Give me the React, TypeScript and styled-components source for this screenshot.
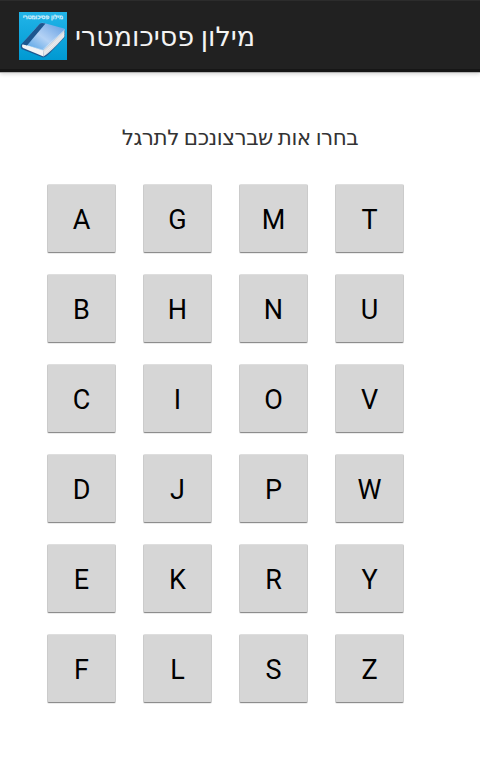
import React from 'react';
import styled, { createGlobalStyle } from 'styled-components';

const GlobalStyle = createGlobalStyle`
  * { box-sizing: border-box; }
  body {
    margin: 0;
    background: #fff;
    font-family: Roboto, 'DejaVu Sans', sans-serif;
  }
`;

const Screen = styled.div`
  width: 480px;
  height: 762px;
  overflow: hidden;
  background: #fff;
`;

const ActionBar = styled.header`
  display: flex;
  align-items: center;
  height: 72px;
  padding-left: 19px;
  gap: 8px;
  background: #212121;
  border-top: 1px solid #2c2c2c;
  border-bottom: 3px solid #161616;
  box-shadow: 0 1px 0 #b4b4b4, 0 2px 4px rgba(0, 0, 0, 0.18);
`;

const AppIcon = styled.svg`
  display: block;
  width: 48px;
  height: 48px;
  flex: none;
  margin-top: 2px;
`;

const Title = styled.h1`
  margin: 3px 0 0;
  font: 400 27px/36px 'DejaVu Sans', sans-serif;
  word-spacing: -2px;
  color: #f3f3f3;
  white-space: nowrap;
`;

const Prompt = styled.p`
  margin: 51px 0 0;
  text-align: center;
  font: 400 21.5px/30px 'DejaVu Sans', sans-serif;
  letter-spacing: -0.45px;
  word-spacing: -1.5px;
  color: #333;
  white-space: nowrap;
`;

const LetterGrid = styled.main`
  display: grid;
  grid-template-columns: repeat(4, 69px);
  grid-auto-rows: 69px;
  column-gap: 27px;
  row-gap: 21px;
  margin: 31px 0 0 47px;
`;

const LetterButton = styled.button`
  padding: 3px 0 0;
  border: 1px solid #cbcbcb;
  border-top-color: #dedede;
  border-bottom-color: #8d8d8d;
  border-radius: 2px;
  background: #d6d6d6;
  box-shadow: 0 1px 0 #ececec;
  color: #000;
  font: 400 27px/32px Roboto, sans-serif;
`;

const rows = ['AGMT', 'BHNU', 'CIOV', 'DJPW', 'EKRY', 'FLSZ'];

function BookIcon() {
  return (
    <AppIcon viewBox="0 0 48 48" aria-hidden="true">
      <defs>
        <linearGradient id="sky" x1="0" y1="0" x2="0" y2="1">
          <stop offset="0" stopColor="#22b4e8" />
          <stop offset="1" stopColor="#0099d2" />
        </linearGradient>
        <linearGradient id="cover" x1="0.1" y1="0.9" x2="0.9" y2="0.2">
          <stop offset="0" stopColor="#58a5e6" />
          <stop offset="0.5" stopColor="#b4d2f5" />
          <stop offset="1" stopColor="#75a9e6" />
        </linearGradient>
      </defs>
      <rect width="48" height="48" fill="url(#sky)" />
      <text x="24" y="7.4" textAnchor="middle" direction="rtl" fontFamily="DejaVu Sans" fontSize="6" fill="#e4f7ff" stroke="#e4f7ff" strokeWidth=".25" textLength="40">
        מילון פסיכומטרי
      </text>
      <path d="M2 32 Q1 35 2.500 37 L24 45.500 Q27 45 31 41 L45.500 25.500 L46 18 L24 37 Z" fill="#1d568f" />
      <path d="M4 32 L24 38 L24.500 44.500 L4 36 Q2 34 4 32Z" fill="#f2f3f6" />
      <path d="M24 38 L45.500 18 L45.300 25 Q32 40 24.500 44.500Z" fill="#dcdee3" />
      <path d="M24.500 41 L45.300 21.500 M24.500 43 L45.300 23.500" stroke="#f5f5f7" strokeWidth=".7" />
      <path d="M3 31.500 L21 11.500 Q22.500 10.500 25 11 L45 16.500 Q46.500 17 45.500 18.200 L25 37.500 Q24 38.500 22.500 38 Z" fill="url(#cover)" />
      <path d="M2.500 32 L21 11.500 Q22.500 10.500 26.500 11.500 L8 33.500 Z" fill="#1d568f" />
      <path d="M8 33.500 L23.500 38 L45.500 18" fill="none" stroke="#dceefa" strokeWidth=".6" />
    </AppIcon>
  );
}

export default function App() {
  return (
    <Screen>
      <GlobalStyle />
      <ActionBar>
        <BookIcon />
        <Title dir="rtl">מילון פסיכומטרי</Title>
      </ActionBar>
      <Prompt dir="rtl">בחרו אות שברצונכם לתרגל</Prompt>
      <LetterGrid>
        {rows.flatMap((row) =>
          row.split('').map((letter) => (
            <LetterButton key={letter} type="button">
              {letter}
            </LetterButton>
          )),
        )}
      </LetterGrid>
    </Screen>
  );
}
